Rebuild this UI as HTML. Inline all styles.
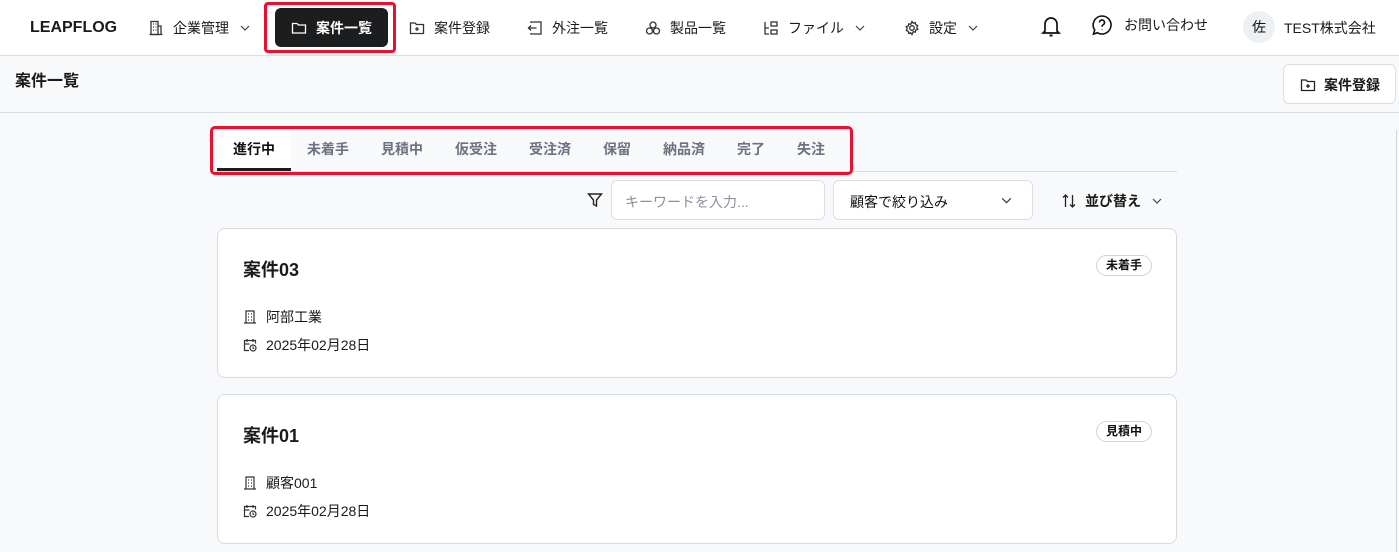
<!DOCTYPE html>
<html><head><meta charset="utf-8"><style>
*{box-sizing:border-box;margin:0;padding:0}
body{width:1399px;height:552px;overflow:hidden;background:#f8f9fb;font-family:"Liberation Sans","Noto Sans CJK JP",sans-serif;color:#111;position:relative}
.nav{position:absolute;left:0;top:0;width:1399px;height:56px;background:#fff;border-bottom:1px solid #d9dee5}
.a{position:absolute;display:flex;align-items:center;font-size:14px;color:#1a1a1a;white-space:nowrap}
svg{display:block}
.hdr{position:absolute;left:0;top:56px;width:1399px;height:57px;border-bottom:1px solid #d9dee5;background:#f8f9fb}
.card{position:absolute;left:217px;width:960px;background:#fff;border:1px solid #d6dbe2;border-radius:8px}
.badge{position:absolute;right:24px;top:26px;height:21px;padding:0 9px;border:1px solid #cfd4db;border-radius:11px;font-size:12px;font-weight:bold;line-height:19px}
.tab{position:absolute;top:139px;font-size:14px;font-weight:bold;color:#6b7280}
</style></head><body>
<div class="nav"></div>
<div class="a" style="left:30px;top:19px;font-weight:bold;font-size:16px">LEAPFLOG</div>
<div class="a" style="left:148px;top:18px"><svg width="16" height="16" viewBox="0 0 16 16" fill="none" stroke="#333" stroke-width="1.3"><rect x="3" y="1.5" width="7" height="13"/><path d="M10 6h3v8.5M1.5 14.5h13M5 4h1M7.5 4h1M5 7h1M7.5 7h1M5 10h1M7.5 10h1"/></svg><span style="margin-left:9px">企業管理</span><svg style="margin-left:10px" width="12" height="12" viewBox="0 0 12 12" fill="none" stroke="#444" stroke-width="1.2"><path d="M2 4l4 4 4-4"/></svg></div>
<div style="position:absolute;left:264px;top:2px;width:132px;height:51px;border:3px solid #e8102e;border-radius:4px"></div>
<div style="position:absolute;left:275px;top:8px;width:113px;height:39px;background:#1c1d1f;border-radius:6px"></div>
<div class="a" style="left:291px;top:18px;color:#fff;font-weight:bold"><svg width="16" height="16" viewBox="0 0 16 16" fill="none" stroke="#fff" stroke-width="1.3"><path d="M1.5 3.5h4.5l1.5 1.5h7v8h-13z"/></svg><span style="margin-left:9px">案件一覧</span></div>
<div class="a" style="left:409px;top:18px"><svg width="16" height="16" viewBox="0 0 16 16" fill="none" stroke="#333" stroke-width="1.3"><path d="M1.5 3h4.5l1.5 1.5h7v9h-13z M8 7v4M6 9h4"/></svg><span style="margin-left:9px">案件登録</span></div>
<div class="a" style="left:527px;top:18px"><svg width="16" height="16" viewBox="0 0 16 16" fill="none" stroke="#333" stroke-width="1.3"><path d="M4 3V2h10v12H4v-1M1.5 8h8M4 5.5L1.5 8 4 10.5"/></svg><span style="margin-left:9px">外注一覧</span></div>
<div class="a" style="left:645px;top:18px"><svg width="16" height="16" viewBox="0 0 16 16" fill="none" stroke="#333" stroke-width="1.3"><circle cx="8" cy="5" r="3"/><circle cx="4.5" cy="11" r="3"/><circle cx="11.5" cy="11" r="3"/></svg><span style="margin-left:9px">製品一覧</span></div>
<div class="a" style="left:763px;top:18px"><svg width="16" height="16" viewBox="0 0 16 16" fill="none" stroke="#333" stroke-width="1.3"><path d="M2 2v12h4M2 8h4"/><rect x="8" y="2" width="6" height="4"/><rect x="8" y="10" width="6" height="4"/></svg><span style="margin-left:9px">ファイル</span><svg style="margin-left:10px" width="12" height="12" viewBox="0 0 12 12" fill="none" stroke="#444" stroke-width="1.2"><path d="M2 4l4 4 4-4"/></svg></div>
<div class="a" style="left:904px;top:18px"><svg width="16" height="16" viewBox="0 0 16 16" fill="none" stroke="#333" stroke-width="1.3"><circle cx="8" cy="8" r="2.3"/><path d="M8 1.5l1.3 1.7 2-.6.4 2.1 2 .8-.9 1.9 .9 1.9-2 .8-.4 2.1-2-.6L8 14.5l-1.3-1.7-2 .6-.4-2.1-2-.8.9-1.9-.9-1.9 2-.8.4-2.1 2 .6z"/></svg><span style="margin-left:9px">設定</span><svg style="margin-left:10px" width="12" height="12" viewBox="0 0 12 12" fill="none" stroke="#444" stroke-width="1.2"><path d="M2 4l4 4 4-4"/></svg></div>
<div class="a" style="left:1040px;top:14px"><svg width="22" height="24" viewBox="0 0 22 24" fill="none" stroke="#111" stroke-width="1.7"><path d="M5 17V10a6 6 0 0112 0v7l2 2H3z"/><path d="M9.5 21.5h3" stroke-width="2"/></svg></div>
<div class="a" style="left:1091px;top:14px"><svg width="22" height="22" viewBox="0 0 22 22" fill="none" stroke="#111" stroke-width="1.6"><path d="M11 2a9 9 0 11-4.5 16.8L2.5 20l1.2-4A9 9 0 0111 2z"/><path d="M8.5 8.5a2.5 2.5 0 114 2c-1 .6-1.5 1-1.5 2.2M11 15.5v.5"/></svg><span style="margin-left:11px">お問い合わせ</span></div>
<div style="position:absolute;left:1243px;top:11px;width:32px;height:32px;border-radius:50%;background:#eef1f4;font-size:14px;text-align:center;line-height:32px">佐</div>
<div class="a" style="left:1284px;top:18px">TEST株式会社</div>

<div class="hdr"></div>
<div class="a" style="left:15px;top:67px;font-size:16px;font-weight:bold">案件一覧</div>
<div style="position:absolute;left:1283px;top:64px;width:113px;height:40px;background:#fff;border:1px solid #d9dee5;border-radius:6px"></div>
<div class="a" style="left:1300px;top:75px;font-weight:bold;font-size:14px"><svg width="16" height="16" viewBox="0 0 16 16" fill="none" stroke="#222" stroke-width="1.3"><path d="M1.5 3h4.5l1.5 1.5h7v9h-13z M8 7v4M6 9h4"/></svg><span style="margin-left:8px">案件登録</span></div>
<div style="position:absolute;left:1396px;top:130px;width:1px;height:422px;background:#cfd4db"></div>

<div style="position:absolute;left:217px;top:171px;width:960px;height:1px;background:#d6dbe2"></div>
<div style="position:absolute;left:217px;top:168px;width:74px;height:3px;background:#1c1d1f"></div>
<div style="position:absolute;left:217px;top:131px;width:74px;height:37px;background:#fff"></div>
<div style="position:absolute;left:210px;top:126px;width:643px;height:49px;border:3px solid #e8102e;border-radius:5px"></div>
<div class="tab" style="left:233px;color:#111">進行中</div>
<div class="tab" style="left:307px">未着手</div>
<div class="tab" style="left:381px">見積中</div>
<div class="tab" style="left:455px">仮受注</div>
<div class="tab" style="left:529px">受注済</div>
<div class="tab" style="left:603px">保留</div>
<div class="tab" style="left:663px">納品済</div>
<div class="tab" style="left:737px">完了</div>
<div class="tab" style="left:797px">失注</div>

<svg style="position:absolute;left:587px;top:192px" width="16" height="16" viewBox="0 0 16 16" fill="none" stroke="#222" stroke-width="1.4"><path d="M1.5 2h13L9.5 8v6l-3-1.5V8z"/></svg>
<div style="position:absolute;left:611px;top:180px;width:214px;height:40px;background:#fff;border:1px solid #d9dee5;border-radius:6px;font-size:14px;color:#8a9099;padding:11px 13px">キーワードを入力...</div>
<div style="position:absolute;left:833px;top:180px;width:200px;height:40px;background:#fff;border:1px solid #d9dee5;border-radius:6px;font-size:14px;padding:11px 16px">顧客で絞り込み</div>
<svg style="position:absolute;left:1000px;top:194px" width="13" height="13" viewBox="0 0 12 12" fill="none" stroke="#444" stroke-width="1.2"><path d="M2 4l4 4 4-4"/></svg>
<div class="a" style="left:1061px;top:191px;font-weight:bold"><svg width="16" height="16" viewBox="0 0 16 16" fill="none" stroke="#222" stroke-width="1.3"><path d="M4.5 14V2M2 4.5L4.5 2 7 4.5M11.5 2v12M9 11.5l2.5 2.5 2.5-2.5"/></svg><span style="margin-left:8px">並び替え</span><svg style="margin-left:10px" width="12" height="12" viewBox="0 0 12 12" fill="none" stroke="#444" stroke-width="1.2"><path d="M2 4l4 4 4-4"/></svg></div>

<div class="card" style="top:228px;height:150px"><div class="a" style="left:25px;top:27px;font-size:18px;font-weight:bold">案件03</div><div class="badge">未着手</div>
<div class="a" style="left:25px;top:78px"><svg width="14" height="14" viewBox="0 0 14 14" fill="none" stroke="#333" stroke-width="1.2"><path d="M3 1h8v12H3zM1 13h12M5 4h1M8 4h1M5 7h1M8 7h1M5 10h1M8 10h1"/></svg><span style="margin-left:9px">阿部工業</span></div>
<div class="a" style="left:25px;top:106px"><svg width="14" height="14" viewBox="0 0 14 14" fill="none" stroke="#333" stroke-width="1.2"><path d="M6 12.5H1.5v-10h11v3M4 1v3M10 1v3M1.5 6h5"/><circle cx="10" cy="10" r="3"/><path d="M10 8.5V10l1 .8"/></svg><span style="margin-left:9px">2025年02月28日</span></div></div>

<div class="card" style="top:394px;height:150px"><div class="a" style="left:25px;top:27px;font-size:18px;font-weight:bold">案件01</div><div class="badge">見積中</div>
<div class="a" style="left:25px;top:78px"><svg width="14" height="14" viewBox="0 0 14 14" fill="none" stroke="#333" stroke-width="1.2"><path d="M3 1h8v12H3zM1 13h12M5 4h1M8 4h1M5 7h1M8 7h1M5 10h1M8 10h1"/></svg><span style="margin-left:9px">顧客001</span></div>
<div class="a" style="left:25px;top:106px"><svg width="14" height="14" viewBox="0 0 14 14" fill="none" stroke="#333" stroke-width="1.2"><path d="M6 12.5H1.5v-10h11v3M4 1v3M10 1v3M1.5 6h5"/><circle cx="10" cy="10" r="3"/><path d="M10 8.5V10l1 .8"/></svg><span style="margin-left:9px">2025年02月28日</span></div></div>
</body></html>
